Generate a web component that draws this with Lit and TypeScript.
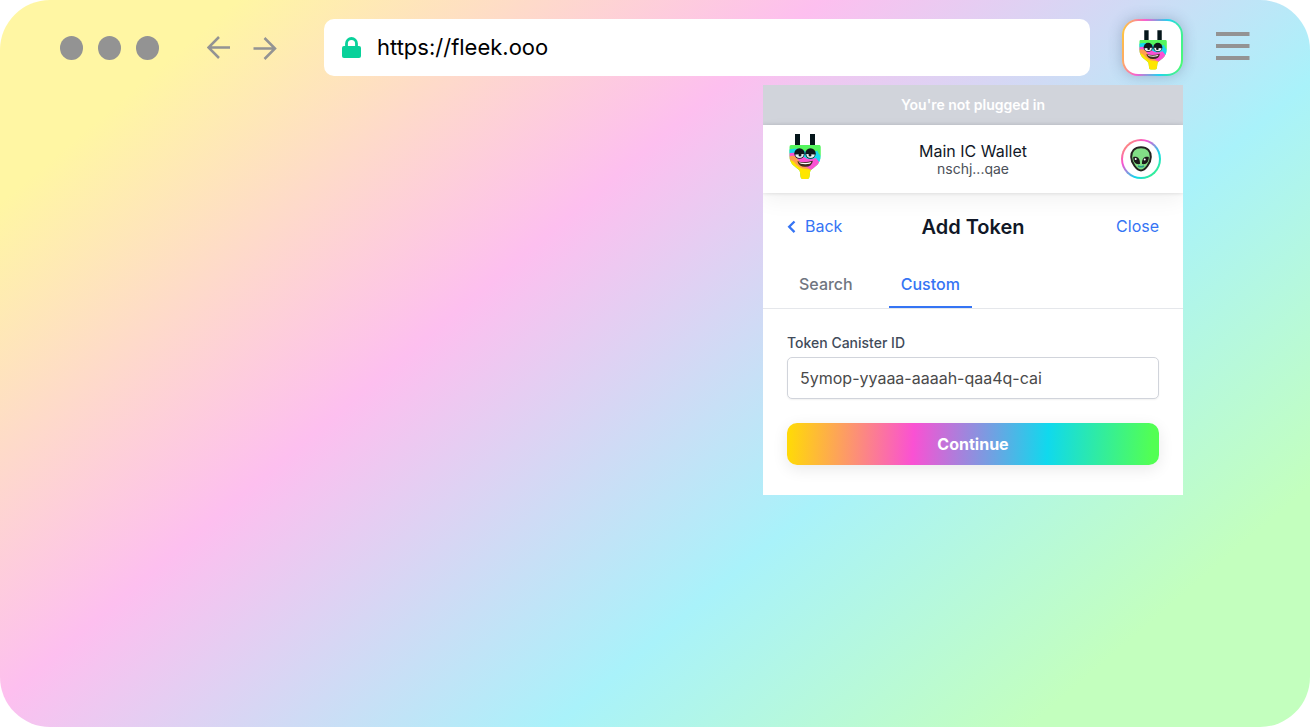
import { LitElement, html, css } from "lit";
import { customElement, state } from "lit/decorators.js";

@customElement("plug-mascot")
class PlugMascot extends LitElement {
  static styles = css`
    :host { display: block; }
    svg { display: block; width: 100%; height: 100%; }
  `;

  render() {
    return html`
      <svg viewBox="0 0 32 45" aria-hidden="true">
        <defs>
          <clipPath id="body">
            <path d="M2 11h28q1.500 0 1.500 2v9q0 6-4 9.500q-2.500 2.200-5 4q-1.500 1.200-1.500 3l-.5 4q0 2-2 2.500h-5q-2-.5-2-2.500l-.5-4q0-1.800-1.500-3q-2.500-1.800-5-4Q.5 28 .5 22v-9q0-2 1.500-2z"/>
          </clipPath>
          <filter id="soft" x="-10%" y="-10%" width="120%" height="120%"><feGaussianBlur stdDeviation="0.5"/></filter>
        </defs>
        <path d="M6 0h5v12H6zM21 0h5v12h-5z" fill="#05161a"/>
        <g clip-path="url(#body)">
          <rect y="10" width="32" height="35" fill="#55f55e"/>
          <g filter="url(#soft)">
            <path d="M-2 16q10-3 16 0q6 5 11 2q4-2 9-3v31H-2z" fill="#13d9ee"/>
            <path d="M33 9v14q-4-3-5-7l-2-7z" fill="#55f55e"/>
            <path d="M-2 20q9-3 14 1q6 5 11 4l4-1q2 3 6 7v15H-2z" fill="#fa51d3"/>
            <path d="M-2 24q5-4 9-1q4 6 8 9q5 2 7 4v10H-2z" fill="#ff9f50"/>
            <path d="M-2 27q4-2 7 1q5 7 12 7l6 1-2 10H-2z" fill="#ffe600"/>
          </g>
        </g>
        <ellipse cx="10.500" cy="19.500" rx="5.200" ry="5.200" fill="#10171b"/>
        <ellipse cx="21.500" cy="19.500" rx="5.200" ry="5.200" fill="#10171b"/>
        <path d="M6.300 20.500l8.500-.6q-.3 4-4.300 4t-4.200-3.400z" fill="#e6f4f4"/>
        <path d="M17.300 19.900l8.500.6q-.2 3.400-4.200 3.400t-4.300-4z" fill="#e6f4f4"/>
        <circle cx="11" cy="21" r="1.500" fill="#10171b"/>
        <circle cx="21" cy="21" r="1.500" fill="#10171b"/>
        <path d="M8.300 27.300q7.500 2 15.500-.5q-.5 6-7.800 6q-6 0-7.700-5.500z" fill="#3c2a1c"/>
        <path d="M9.800 28.300q6.500 1.500 12.500-.3q-.3 2.200-6 2.200q-5.500 0-6.500-1.900z" fill="#fff"/>
      </svg>
    `;
  }
}

@customElement("wallet-popup")
class WalletPopup extends LitElement {
  @state() private canister = "5ymop-yyaaa-aaaah-qaa4q-cai";
  @state() private tab = "Custom";

  static styles = css`
    :host { display: block; background: #fff; color: #111827; overflow: hidden; }
    * { box-sizing: border-box; }
    button, input { font: inherit; margin: 0; }
    button { border: 0; padding: 0; background: none; color: inherit; cursor: pointer; }
    .status { background: #d1d4db; color: #fff; font-size: 14px; line-height: 20px; font-weight: 600; text-align: center; padding: 10px; }
    .account { display: grid; grid-template-columns: 1fr auto 1fr; align-items: center; height: 68px; padding: 0 22px; box-shadow: 0 0 4px rgba(0,0,0,.15), 0 8px 20px rgba(0,0,0,.05); }
    .mascot { width: 32px; height: 45px; margin: 0 0 5px 4px; }
    .who { display: flex; flex-direction: column; text-align: center; }
    .name { font-size: 16px; line-height: 20px; }
    .principal { font-size: 14px; line-height: 16px; color: #4b5058; }
    .avatar { justify-self: end; width: 40px; height: 40px; border-radius: 50%; border: 2px solid transparent; display: grid; place-items: center;
      background: linear-gradient(#fff,#fff) padding-box, linear-gradient(135deg,#ffb040 0%,#fa51d3 33%,#10d9ed 66%,#52ff53 100%) border-box; }
    .avatar svg { width: 22px; height: 26px; }
    .heading { display: grid; grid-template-columns: 1fr auto 1fr; align-items: start; padding: 20px 24px 0; }
    .link { color: #3574f4; font-size: 16px; line-height: 26px; }
    .back { justify-self: start; display: flex; align-items: center; gap: 9px; }
    .back svg { width: 9px; height: 14px; }
    .close { justify-self: end; }
    h1 { margin: 0; font-size: 20px; line-height: 28px; font-weight: 600; }
    .tabs { display: flex; gap: 24px; padding: 19px 24px 0; border-bottom: 1px solid #e5e7eb; }
    .tab { padding: 12px 12px 10px; border-bottom: 2px solid transparent; font-size: 16px; line-height: 24px; font-weight: 500; color: #70757f; }
    .tab.active { color: #3574f4; border-color: #3574f4; }
    form { display: flex; flex-direction: column; padding: 24px 24px 30px; }
    label { font-size: 14px; line-height: 20px; font-weight: 500; color: #414b5a; margin-bottom: 4px; }
    input { height: 42px; width: 100%; border: 1px solid #d1d4db; border-radius: 5px; padding: 0 12px; font-size: 16px; color: #4a4a4a; background: #fff; box-shadow: 0 1px 2px rgba(0,0,0,.06); outline: none; }
    .continue { margin-top: 24px; height: 42px; border-radius: 10px; color: #fff; font-size: 16px; font-weight: 700;
      background: linear-gradient(93deg,#ffd80a 1%,#fa51d3 34%,#10d9ed 70%,#52ff53 98%); box-shadow: 0 4px 16px rgba(0,0,0,.09); }
  `;

  render() {
    return html`
      <div class="status" role="status">You're not plugged in</div>
      <header class="account">
        <plug-mascot class="mascot"></plug-mascot>
        <div class="who"><span class="name">Main IC Wallet</span><span class="principal">nschj...qae</span></div>
        <button class="avatar" aria-label="Account">
          <svg viewBox="0 0 22 26">
            <path d="M11 1.200C4.500 1.200 1.200 5.500 1.200 11c0 6 5.800 13.500 9.800 13.500S20.800 17 20.800 11c0-5.500-3.300-9.800-9.800-9.800z" fill="#82de86" stroke="#23211f" stroke-width="2"/>
            <path d="M3.200 11c5-.8 7 2 6.800 7c-4.500.8-6.800-1.700-6.800-7zM18.800 11c-5-.8-7 2-6.800 7c4.500.8 6.800-1.700 6.800-7z" fill="#1c1a1b"/>
            <circle cx="5.700" cy="13" r="1" fill="#fff"/><circle cx="14.700" cy="13.600" r="1" fill="#fff"/>
            <path d="M8 20q3 1.500 6 0" fill="none" stroke="#2b9a8c" stroke-width="1.500"/>
          </svg>
        </button>
      </header>
      <div class="heading">
        <button class="link back">
          <svg viewBox="0 0 9 14" fill="none" stroke="#3574f4" stroke-width="2.300"><path d="M7.500 2.500L2.200 7.800l5.300 5.300"/></svg>Back
        </button>
        <h1>Add Token</h1>
        <button class="link close">Close</button>
      </div>
      <div class="tabs" role="tablist">
        ${["Search", "Custom"].map((t) => html`
          <button class="tab ${t === this.tab ? "active" : ""}" role="tab" aria-selected=${t === this.tab} @click=${() => (this.tab = t)}>${t}</button>`)}
      </div>
      <form @submit=${(e: Event) => e.preventDefault()}>
        <label for="canister">Token Canister ID</label>
        <input id="canister" type="text" spellcheck="false" .value=${this.canister} @input=${(e: Event) => (this.canister = (e.target as HTMLInputElement).value)}>
        <button class="continue">Continue</button>
      </form>
    `;
  }
}

@customElement("app-root")
class AppRoot extends LitElement {
  static styles = css`
    :host { display: block; font-family: Inter, sans-serif; background: #fff; }
    * { box-sizing: border-box; }
    button, input { font: inherit; margin: 0; padding: 0; border: 0; background: none; }
    button { cursor: pointer; }
    svg { display: block; }
    .window { min-height: 100vh; border-radius: 50px; padding: 19px 60px 0;
      background: linear-gradient(139.5deg,#fff6a3 11%,#fdbfef 38%,#a9f2fa 65%,#c3ffbe 87%); }
    .bar { display: flex; align-items: center; height: 57px; }
    .dots { display: flex; gap: 15px; }
    .dot { width: 23px; height: 24px; border-radius: 50%; background: #939393; }
    .nav { display: flex; gap: 22px; margin: 0 47px 0 48px; }
    .nav svg { width: 24px; height: 24px; }
    .address { flex: 1; min-width: 0; height: 57px; background: #fff; border-radius: 10px; display: flex; align-items: center; gap: 16px; padding: 0 18px; }
    .address svg { width: 19px; height: 22px; }
    .address input { flex: 1; min-width: 0; font-size: 22px; padding-bottom: 2px; color: #000; outline: none; }
    .extension { width: 61px; height: 57px; padding-top: 4px; margin-left: 32px; border-radius: 16px; border: 2px solid transparent; display: grid; place-items: center;
      background: linear-gradient(#fff,#fff) padding-box, linear-gradient(100deg,#ffd32a 0%,#fa5fd0 33%,#20d5ee 66%,#52ff63 100%) border-box; box-shadow: 0 0 14px rgba(60,70,110,.3); }
    .extension plug-mascot { width: 28px; height: 40px; }
    .menu { margin-left: 33px; padding-bottom: 4px; }
    .content { display: flex; justify-content: flex-end; padding: 9px 67px 24px 0; }
    wallet-popup { width: 420px; }
  `;

  render() {
    return html`
      <main class="window">
        <div class="bar">
          <div class="dots"><span class="dot"></span><span class="dot"></span><span class="dot"></span></div>
          <nav class="nav">
            <button aria-label="Back"><svg viewBox="0 0 24 24" fill="none" stroke="#939393" stroke-width="2.500"><path d="M23 11.500H1.500M12 1L1.500 11.500 12 22"/></svg></button>
            <button aria-label="Forward"><svg viewBox="0 0 24 24" fill="none" stroke="#939393" stroke-width="2.500"><path d="M.5 12.500H22M11.500 2L22 12.500 11.500 23"/></svg></button>
          </nav>
          <div class="address">
            <svg viewBox="0 0 19 22" aria-hidden="true"><path d="M4.500 10V6.500a5 5 0 0 1 10 0V10" fill="none" stroke="#08d19a" stroke-width="2.800"/><rect y="9" width="19" height="12" rx="2" fill="#08d19a"/></svg>
            <input type="text" aria-label="Address" .value=${"https://fleek.ooo"}>
          </div>
          <button class="extension" aria-label="Plug"><plug-mascot></plug-mascot></button>
          <button class="menu" aria-label="Menu"><svg width="34" height="30" viewBox="0 0 34 30"><path d="M0 3h33.500M0 15h33.500M0 27h33.500" stroke="#939393" stroke-width="4"/></svg></button>
        </div>
        <div class="content"><wallet-popup></wallet-popup></div>
      </main>
    `;
  }
}
